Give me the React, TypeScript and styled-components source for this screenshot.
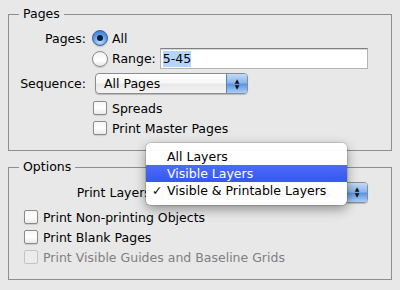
import { createGlobalStyle } from 'styled-components';
import styled from 'styled-components';

const GlobalStyle = createGlobalStyle`
  html, body {
    margin: 0;
    background: #e8e8e8;
  }
  body {
    font-family: 'DejaVu Sans', 'Lucida Grande', sans-serif;
    font-size: 12.5px;
    color: #000;
  }
`;

const layerOptions = ['All Layers', 'Visible Layers', 'Visible & Printable Layers'];

export default function App() {
  return (
    <>
      <GlobalStyle />
      <Panel>
        <Group>
          <Legend>Pages</Legend>
          <Form>
            <FormRow h={20}>
              <Label>Pages:</Label>
              <Control>
                <Radio checked />
                <span>All</span>
              </Control>
            </FormRow>

            <FormRow h={21}>
              <span />
              <Control>
                <Radio />
                <span>Range:</span>
                <TextField>
                  <Selected>5-45</Selected>
                </TextField>
              </Control>
            </FormRow>

            <FormRow h={21} gapTop={4}>
              <Label>Sequence:</Label>
              <Control>
                <Popup width={153}>
                  <PopupText>All Pages</PopupText>
                  <PopupArrows>
                    <span>▲</span>
                    <span>▼</span>
                  </PopupArrows>
                </Popup>
              </Control>
            </FormRow>

            <FormRow h={20} gapTop={4}>
              <span />
              <Control>
                <Checkbox />
                <span>Spreads</span>
              </Control>
            </FormRow>

            <FormRow h={20}>
              <span />
              <Control>
                <Checkbox />
                <span>Print Master Pages</span>
              </Control>
            </FormRow>
          </Form>
        </Group>

        <Group>
          <Legend>Options</Legend>
          <LayersRow>
            <span>Print Layers:</span>
            <MenuAnchor>
              <Popup width={206}>
                <PopupText>Visible & Printable Layers</PopupText>
                <PopupArrows>
                  <span>▲</span>
                  <span>▼</span>
                </PopupArrows>
              </Popup>
              <Menu>
                {layerOptions.map((opt, i) => (
                  <MenuItem key={opt} active={i === 1}>
                    <Check>{i === 2 ? '✓' : ''}</Check>
                    {opt}
                  </MenuItem>
                ))}
              </Menu>
            </MenuAnchor>
          </LayersRow>
          <CheckList>
            <Control>
              <Checkbox />
              <span>Print Non-printing Objects</span>
            </Control>
            <Control>
              <Checkbox />
              <span>Print Blank Pages</span>
            </Control>
            <Control disabled>
              <Checkbox disabled />
              <span>Print Visible Guides and Baseline Grids</span>
            </Control>
          </CheckList>
        </Group>
      </Panel>
    </>
  );
}

const Panel = styled.div`
  width: 400px;
  height: 290px;
  box-sizing: border-box;
  padding: 6px 8px 0;
  display: flex;
  flex-direction: column;
  gap: 8px;
`;

const Group = styled.fieldset`
  margin: 0;
  border: 1px solid #8e8e8e;
  padding: 0 23px 12px 8px;
  min-width: 0;
`;

const Legend = styled.legend`
  margin-left: 2px;
  padding: 0 4px;
  line-height: 16px;
  height: 16px;
`;

const Form = styled.div`
  display: flex;
  flex-direction: column;
  padding-top: 6px;
`;

const FormRow = styled.div<{ h: number; gapTop?: number }>`
  display: grid;
  grid-template-columns: 69px 1fr;
  column-gap: 6px;
  align-items: center;
  height: ${({ h }) => h}px;
  margin-top: ${({ gapTop }) => gapTop ?? 0}px;
`;

const Label = styled.span`
  text-align: right;
  white-space: nowrap;
`;

const Control = styled.div<{ disabled?: boolean }>`
  display: flex;
  align-items: center;
  gap: 4px;
  height: 20px;
  color: ${({ disabled }) => (disabled ? '#7f7f7f' : '#000')};
  white-space: nowrap;
`;

const Radio = styled.span<{ checked?: boolean }>`
  width: 14px;
  height: 14px;
  border-radius: 50%;
  flex: none;
  position: relative;
  border: 1px solid ${({ checked }) => (checked ? '#3a5f9c' : '#8a8a8a')};
  background: ${({ checked }) =>
    checked
      ? 'radial-gradient(circle at 50% 75%, #bfe0ff 0%, #5a9ae6 55%, #2f6fcf 100%)'
      : 'linear-gradient(#f2f2f2, #ffffff 60%, #e6e6e6)'};
  box-shadow: 0 1px 1px rgba(0, 0, 0, 0.15);

  &::after {
    content: '';
    display: ${({ checked }) => (checked ? 'block' : 'none')};
    position: absolute;
    left: 4px;
    top: 4px;
    width: 6px;
    height: 6px;
    border-radius: 50%;
    background: #0d1b33;
  }
`;

const TextField = styled.div`
  flex: 1;
  height: 21px;
  box-sizing: border-box;
  background: #fff;
  border: 1px solid #b4b4b4;
  border-top-color: #808080;
  box-shadow: inset 0 1px 0 #d8d8d8;
  display: flex;
  align-items: center;
  padding-left: 2px;
`;

const Selected = styled.span`
  background: #b5d5ff;
  line-height: 16px;
`;

const Popup = styled.div<{ width: number }>`
  width: ${({ width }) => width}px;
  height: 21px;
  box-sizing: border-box;
  margin-left: 3px;
  display: flex;
  border: 1px solid #8c8c8c;
  border-radius: 4px;
  overflow: hidden;
  background: linear-gradient(#ffffff 0%, #f7f7f7 45%, #e9e9e9 55%, #f4f4f4 100%);
  box-shadow: 0 1px 1px rgba(0, 0, 0, 0.2);
`;

const PopupText = styled.span`
  flex: 1;
  padding-left: 8px;
  line-height: 19px;
  white-space: nowrap;
  overflow: hidden;
`;

const PopupArrows = styled.span`
  width: 20px;
  flex: none;
  display: flex;
  flex-direction: column;
  align-items: center;
  justify-content: center;
  border-left: 1px solid #5d7fb5;
  background: linear-gradient(#c3dbf7 0%, #8cb6ec 45%, #5f95e0 55%, #a9cff8 100%);
  font-size: 6px;
  line-height: 6px;
  color: #111;
`;

const Checkbox = styled.span<{ disabled?: boolean }>`
  width: 12px;
  height: 12px;
  margin: 0 1px;
  flex: none;
  border: 1px solid ${({ disabled }) => (disabled ? '#c4c4c4' : '#8a8a8a')};
  border-radius: 2px;
  background: ${({ disabled }) =>
    disabled ? '#ececec' : 'linear-gradient(#f6f6f6, #ffffff 50%, #e9e9e9)'};
  box-shadow: ${({ disabled }) => (disabled ? 'none' : '0 1px 1px rgba(0, 0, 0, 0.12)')};
`;

const LayersRow = styled.div`
  display: flex;
  justify-content: flex-end;
  align-items: center;
  gap: 4px;
  height: 20px;
  margin-top: 7px;
`;

const MenuAnchor = styled.div`
  position: relative;
`;

const Menu = styled.div`
  position: absolute;
  right: 21px;
  top: -39px;
  width: 201px;
  box-sizing: border-box;
  padding: 5px 0 6px;
  background: rgba(255, 255, 255, 0.97);
  border-radius: 5px;
  box-shadow: 0 4px 12px rgba(0, 0, 0, 0.4), 0 0 0 1px rgba(0, 0, 0, 0.12);
`;

const MenuItem = styled.div<{ active?: boolean }>`
  height: 17px;
  line-height: 17px;
  display: flex;
  white-space: nowrap;
  background: ${({ active }) => (active ? 'linear-gradient(#4c6cf6, #3657f2)' : 'transparent')};
  color: ${({ active }) => (active ? '#fff' : '#000')};
`;

const Check = styled.span`
  width: 21px;
  padding-left: 6px;
  box-sizing: border-box;
  flex: none;
`;

const CheckList = styled.div`
  display: flex;
  flex-direction: column;
  margin-top: 5px;
  padding-left: 6px;
`;
